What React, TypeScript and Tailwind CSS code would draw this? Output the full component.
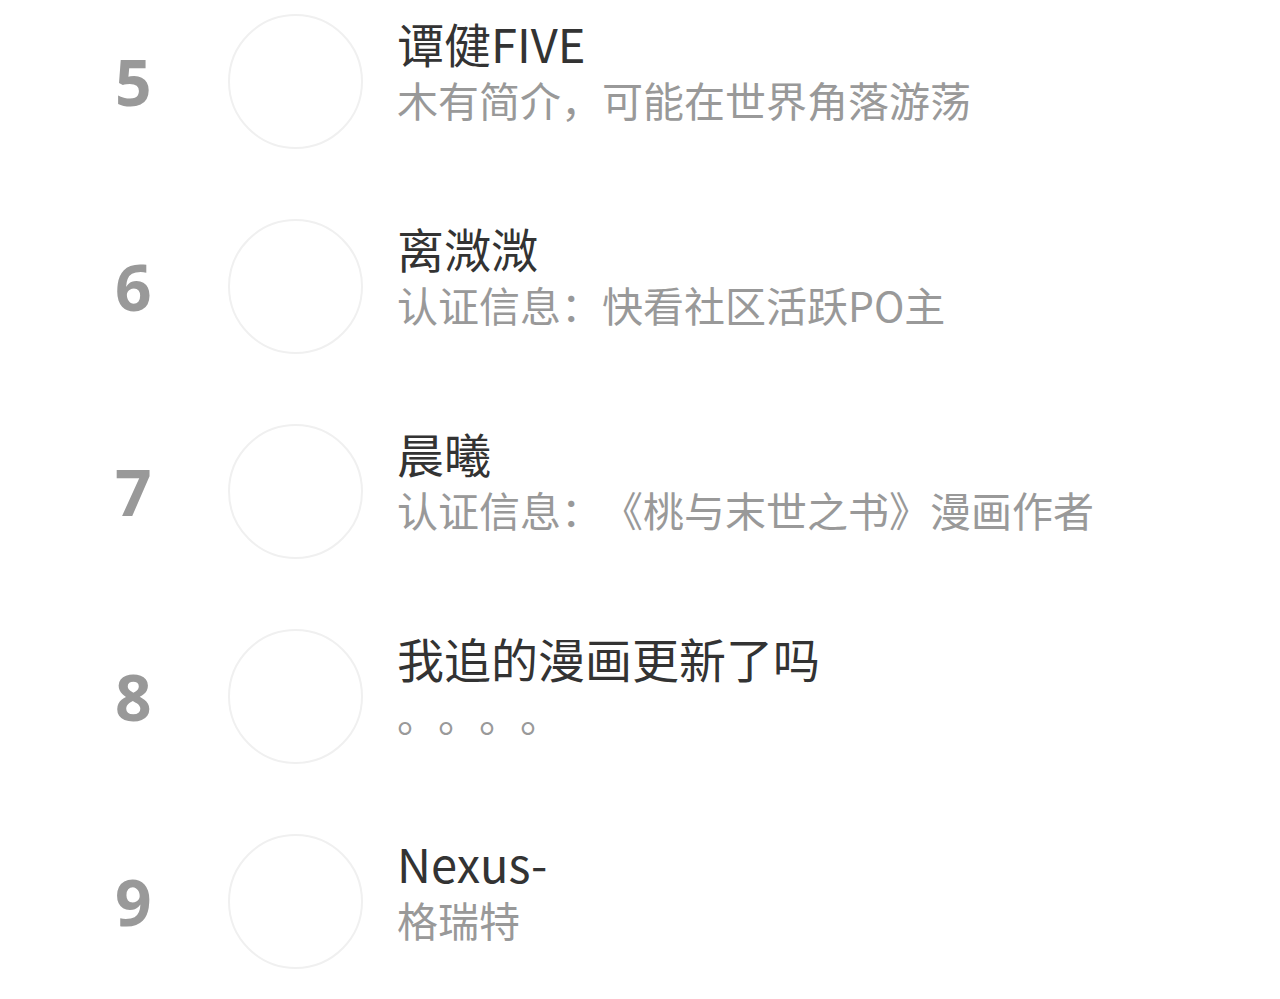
import React from 'react';

interface Author {
  rank: number;
  name: string;
  intro: string;
}

const authors: Author[] = [
  { rank: 5, name: '谭健FIVE', intro: '木有简介，可能在世界角落游荡' },
  { rank: 6, name: '离溦溦', intro: '认证信息：快看社区活跃PO主' },
  { rank: 7, name: '晨曦', intro: '认证信息：《桃与末世之书》漫画作者' },
  { rank: 8, name: '我追的漫画更新了吗', intro: '。。。。' },
  { rank: 9, name: 'Nexus-', intro: '格瑞特' },
];

const cjk = '"Noto Sans CJK SC", "Noto Sans", sans-serif';

const AuthorRow: React.FC<{ author: Author }> = ({ author }) => (
  <div className="flex h-[205px] items-center pl-[115px]">
    <div
      className="w-[36px] shrink-0 text-center text-[64px] font-bold leading-none text-[#999999]"
      style={{ fontFamily: '"Open Sans", sans-serif' }}
    >
      {author.rank}
    </div>
    {/* avatar placeholder */}
    <div className="ml-[77px] h-[135px] w-[135px] shrink-0 rounded-full border-2 border-[#f0f0f0] bg-white" />
    <div
      className="ml-[34px] -mt-[26px] flex min-w-0 flex-col [text-spacing-trim:space-all]"
      style={{ fontFamily: cjk }}
    >
      <div className="text-[47px] leading-[61px] text-[#333333] whitespace-nowrap">{author.name}</div>
      <div className="text-[41px] leading-[52px] text-[#999999] whitespace-nowrap">{author.intro}</div>
    </div>
  </div>
);

export default function App() {
  return (
    <div className="h-[999px] w-[1280px] overflow-hidden bg-white">
      <div className="-mt-[21px]">
        {authors.map((a) => (
          <AuthorRow key={a.rank} author={a} />
        ))}
      </div>
    </div>
  );
}
